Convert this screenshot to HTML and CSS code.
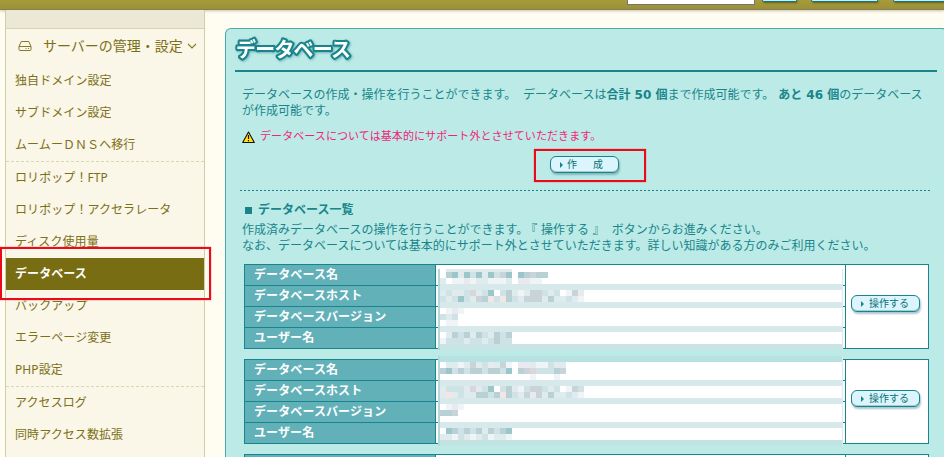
FILE: index.html
```html
<!DOCTYPE html>
<html lang="ja">
<head>
<meta charset="utf-8">
<title>データベース</title>
<link rel="stylesheet" href="styles.css">
</head>
<body>
<header class="topbar">
  <div class="search-field"></div>
  <div class="top-btn top-btn-s"></div>
  <div class="top-btn top-btn-m"></div>
  <div class="top-btn top-btn-l"></div>
</header>
<div class="page">
  <nav class="sidebar">
    <div class="side-cap"></div>
    <div class="side-head">
      <svg class="drive" width="14" height="12" viewBox="0 0 14 12"><path d="M1 6.500 3.200 1.500h7.600L13 6.500V9.500q0 1-1 1H2q-1 0-1-1zM1 6.500h12M7.500 8.500h1M10 8.500h1" fill="none" stroke="#857a28"/></svg>
      <span class="side-title">サーバーの管理・設定</span>
      <svg class="chev" width="10" height="6" viewBox="0 0 10 6"><path d="M1 1l4 4 4-4" fill="none" stroke="#857a28" stroke-width="1.100"/></svg>
    </div>
    <ul class="menu">
      <li>独自ドメイン設定</li>
      <li>サブドメイン設定</li>
      <li>ムームーＤＮＳへ移行</li>
      <li class="sep">ロリポップ！FTP</li>
      <li>ロリポップ！アクセラレータ</li>
      <li>ディスク使用量</li>
      <li class="active">データベース</li>
      <li>バックアップ</li>
      <li>エラーページ変更</li>
      <li>PHP設定</li>
      <li class="sep">アクセスログ</li>
      <li>同時アクセス数拡張</li>
    </ul>
    <div class="mark mark-menu"></div>
  </nav>
  <main class="panel">
    <h1 class="title"><svg width="122" height="31" viewBox="0 0 122 31"><text class="title-text" x="1" y="22" textLength="115">データベース</text></svg></h1>
    <p class="lead">データベースの作成・操作を行うことができます。 <span class="quota">データベースは<b>合計 50 個</b>まで作成可能です。 <b>あと 46 個</b>のデータベース</span><br>が作成可能です。</p>
    <p class="warn"><svg width="13" height="13" viewBox="0 0 13 13"><path d="M6.500 1 12.300 11.500H.7z" fill="#ffe11c" stroke="#111" stroke-width="1.100" stroke-linejoin="round"/><path d="M6.500 4v4M6.500 9v1.300" stroke="#111" stroke-width="1.200"/></svg><span>データベースについては基本的にサポート外とさせていただきます。</span></p>
    <div class="create"><span class="btn btn-create"><i></i><span>作</span><span>成</span></span><div class="mark mark-create"></div></div>
    <h2 class="sub"><i></i>データベース一覧</h2>
    <p class="desc">作成済みデータベースの操作を行うことができます。<span class="quote">『 操作する 』</span> ボタンからお進みください。<br>なお、データベースについては基本的にサポート外とさせていただきます。詳しい知識がある方のみご利用ください。</p>
    <div class="db">
      <div class="names"><div>データベース名</div><div>データベースホスト</div><div>データベースバージョン</div><div>ユーザー名</div></div>
      <div class="values"><div></div><div></div><div></div><div></div></div>
      <div class="action"><span class="btn"><i></i><span>操作する</span></span></div>
      <svg class="mosaic" data-set="0" width="685" height="95"></svg>
    </div>
    <div class="db">
      <div class="names"><div>データベース名</div><div>データベースホスト</div><div>データベースバージョン</div><div>ユーザー名</div></div>
      <div class="values"><div></div><div></div><div></div><div></div></div>
      <div class="action"><span class="btn"><i></i><span>操作する</span></span></div>
      <svg class="mosaic" data-set="1" width="685" height="95"></svg>
    </div>
    <div class="db db-next"></div>
  </main>
</div>
<script src="mosaic.js"></script>
</body>
</html>
```
FILE: mosaic.js
```js
// Pixelated masks over the private values; one letter is one 6px cell.
const colors = {
  a: '#ffffff', b: '#eff5f6', c: '#dfebed', d: '#cfe2e5', e: '#b9d1d4',
  f: '#9cc7ca', g: '#c8d4da', h: '#eae9ef', p: '#f3e7e6', q: '#dcd5da'
};
// y offsets are relative to the top border of the record box.
const sets = [
  {
    top: 5, height: 81,
    rows: { 5: 'accccccccccc', 8: 'aefcfdfcfdgfafegeea', 14: 'cabbhbccbbbcahhbba',
      26: 'cdccdqcdfadecbcggdcdabgh', 32: 'dcdfdcgepdpedcgggceccdcb',
      44: 'abhb', 50: 'dcd', 56: 'abb', 68: 'acedecedcede', 74: 'bdddcddcdedd' },
    bands: { 20: '#d8e9eb', 38: '#d8e9eb', 62: '#d8e9eb', 80: '#c9e4e4' }
  },
  {
    top: -3, height: 90,
    rows: { 3: 'accbcgcdhcgbahhcbbdcc', 9: 'efdedeedeedfaegqdddeg', 15: 'aaaaaaaaaaaaaaabaaaba',
      27: 'cdddcqcdfadecbdggdcdabgd', 33: 'cpcdcceedepedcghgceccdcb',
      45: 'abhb', 51: 'eeg', 69: 'afededecedef', 75: 'ccbdcbcdbccb' },
    bands: { '-3': '#b8e2e1', 21: '#d8e9eb', 39: '#d8e9eb', 63: '#d8e9eb', 81: '#c1e3e2' }
  }
];
const rect = (svg, x, y, w, h, fill) => {
  const r = document.createElementNS('http://www.w3.org/2000/svg', 'rect');
  Object.entries({ x, y, width: w, height: h, fill }).forEach(([k, v]) => r.setAttribute(k, v));
  svg.appendChild(r);
};
document.querySelectorAll('.mosaic').forEach(svg => {
  const set = sets[svg.dataset.set];
  rect(svg, 194, set.top, 405, set.height, '#ffffff');
  Object.entries(set.rows).forEach(([y, row]) =>
    [...row].forEach((c, k) => rect(svg, 196 + k * 6, y, 6, 6, colors[c])));
  Object.entries(set.bands).forEach(([y, fill]) => rect(svg, 194, y, 405, 6, fill));
  rect(svg, 194, set.top, 2, set.height, '#b4d7da');
  rect(svg, 598, set.top, 1, set.height, '#dcebed');
});
```
FILE: styles.css
```css
* { box-sizing: border-box; }
body {
  margin: 0;
  height: 457px;
  overflow: hidden;
  background: #fffdf2;
  font: 12px/16px "DejaVu Sans", "Noto Sans CJK JP", sans-serif;
  text-spacing-trim: space-all;
  color: #17858b;
}
h1, h2, p, ul { margin: 0; padding: 0; }
.topbar {
  height: 10px;
  padding-left: 627px;
  display: flex;
  align-items: flex-start;
  background: linear-gradient(#a69c3c, #9b9037);
  border-bottom: 1px solid #8b7f4d;
  box-shadow: 0 1px 3px rgba(90, 80, 60, .35);
  position: relative;
  overflow: hidden;
}
.search-field {
  flex: none;
  width: 128px;
  height: 5px;
  background: #fff;
  border: 1px solid #77717a;
  border-top: 0;
}
.top-btn {
  height: 2px;
  background: #cceef0;
  border: 1px solid #11757a;
  border-top: 0;
  border-radius: 0 0 4px 4px;
  box-shadow: 1px 1px 2px #5f5a22;
  flex: none;
}
.top-btn-s { width: 35px; margin-left: 7px; }
.top-btn-m { width: 67px; margin-left: 14px; }
.top-btn-l { width: 67px; margin-left: 15px; }
.page { display: flex; height: 447px; overflow: hidden; }
.sidebar {
  position: relative;
  flex: none;
  width: 200px;
  margin-left: 5px;
  border: solid #d0cea8;
  border-width: 0 1px;
  background: #faf6e8;
  color: #7c7017;
  font-family: "Noto Sans", "Noto Sans CJK JP", sans-serif;
}
.side-cap { height: 19px; background: #ebe9d5; border-bottom: 1px solid #d7d6aa; }
.side-head { height: 36px; display: flex; align-items: center; padding-left: 12px; }
.side-head svg { margin-top: -2px; }
.side-title { font-size: 14px; line-height: 34px; margin: -3px 4px 0 11px; }
.menu { list-style: none; }
.menu li { height: 32px; line-height: 32px; padding-left: 9px; white-space: nowrap; letter-spacing: .08px; }
.menu .sep { height: 33px; border-top: 1px dashed #d9d8b4; }
.menu .active { background: #786d12; color: #fff; font-weight: bold; }
.mark { position: absolute; border: 2px solid #ea0a18; box-shadow: 0 0 1px #f03040; }
.mark-menu { left: -6px; top: 237px; width: 211px; height: 53px; }
.mark-create { left: 294px; top: 3px; width: 112px; height: 33px; }
.panel {
  flex: none;
  width: 723px;
  height: 429px;
  margin: 18px 0 0 20px;
  padding: 0 9px;
  border: 1px solid #4aa9a8;
  border-bottom: 0;
  border-radius: 6px 6px 0 0;
  background: #bceae6;
}
.title { height: 43px; width: 702px; border-bottom: 2px solid #17858b; padding-top: 6px; }
.title svg { display: block; overflow: visible; filter: drop-shadow(1px 1px 1px rgba(40, 130, 150, .5)); }
.title text { font: bold 20px "Noto Sans CJK JP", sans-serif; }
.title-text { fill: #fff; stroke: #17858b; stroke-width: 4.200px; stroke-linejoin: round; paint-order: stroke; }
.lead { margin: 15px 0 0 7px; white-space: nowrap; }
.quota { margin-left: 3px; }
.warn { display: flex; align-items: center; gap: 5px; margin: 9px 0 0 7px; height: 18px; color: #f0237c; font-size: 11px; white-space: nowrap; letter-spacing: .08px; }
.create {
  position: relative;
  height: 45px;
  margin-left: 5px;
  width: 690px;
  padding: 10px 1px 0 0;
  display: flex;
  justify-content: center;
  align-items: flex-start;
  background: repeating-linear-gradient(90deg, #17858b 0 2px, transparent 2px 4px) bottom / 100% 1px no-repeat;
}
.btn {
  display: inline-flex;
  align-items: center;
  width: 69px;
  height: 17px;
  padding-left: 9px;
  border: 1px solid #17858b;
  border-radius: 6px;
  background: #dcf5fc;
  box-shadow: inset 0 -1px #9fced5, 1px 2px 2px rgba(50, 110, 130, .4);
  font-size: 10px;
  line-height: 14px;
  color: #087078;
}
.btn i { border: solid transparent; border-width: 3px 0 3px 3px; border-left-color: #17858b; margin-right: 5px; }
.btn-create i { margin-right: 4px; }
.btn-create span + span { margin-left: 16px; }
.sub { margin: 10px 0 0 10px; font-size: 12px; line-height: 18px; display: flex; align-items: center; }
.sub i { width: 7px; height: 7px; background: #17858b; margin-right: 6px; }
.desc { margin: 3px 0 10px 7px; white-space: nowrap; }
.quote { margin: 0 3px 0 -3px; }
.db {
  position: relative;
  display: grid;
  grid-template-columns: 191px 410px 82px;
  width: 685px;
  height: 85px;
  margin: 0 0 10px 9px;
  border: 1px solid #17858b;
  background: #fff;
}
.db-next { height: 3px; margin-bottom: 0; border-bottom: 0; background: linear-gradient(90deg, #62b1b9 190px, #17858b 190px 191px, #fff 191px 600px, #17858b 600px 601px, #fff 601px); }
.names, .values { display: grid; grid-template-rows: 21px 21px 21px 20px; border-right: 1px solid #17858b; }
.names div, .values div { border-bottom: 1px solid #17858b; }
.names div:last-child, .values div:last-child { border-bottom: 0; }
.names { background: #62b1b9; }
.names div { padding-left: 9px; color: #fff; font-weight: bold; line-height: 21px; letter-spacing: .1px; }
.action { display: flex; align-items: flex-start; padding: 30px 0 0 5px; }
.mosaic { position: absolute; left: -1px; top: -1px; overflow: visible; }
```
